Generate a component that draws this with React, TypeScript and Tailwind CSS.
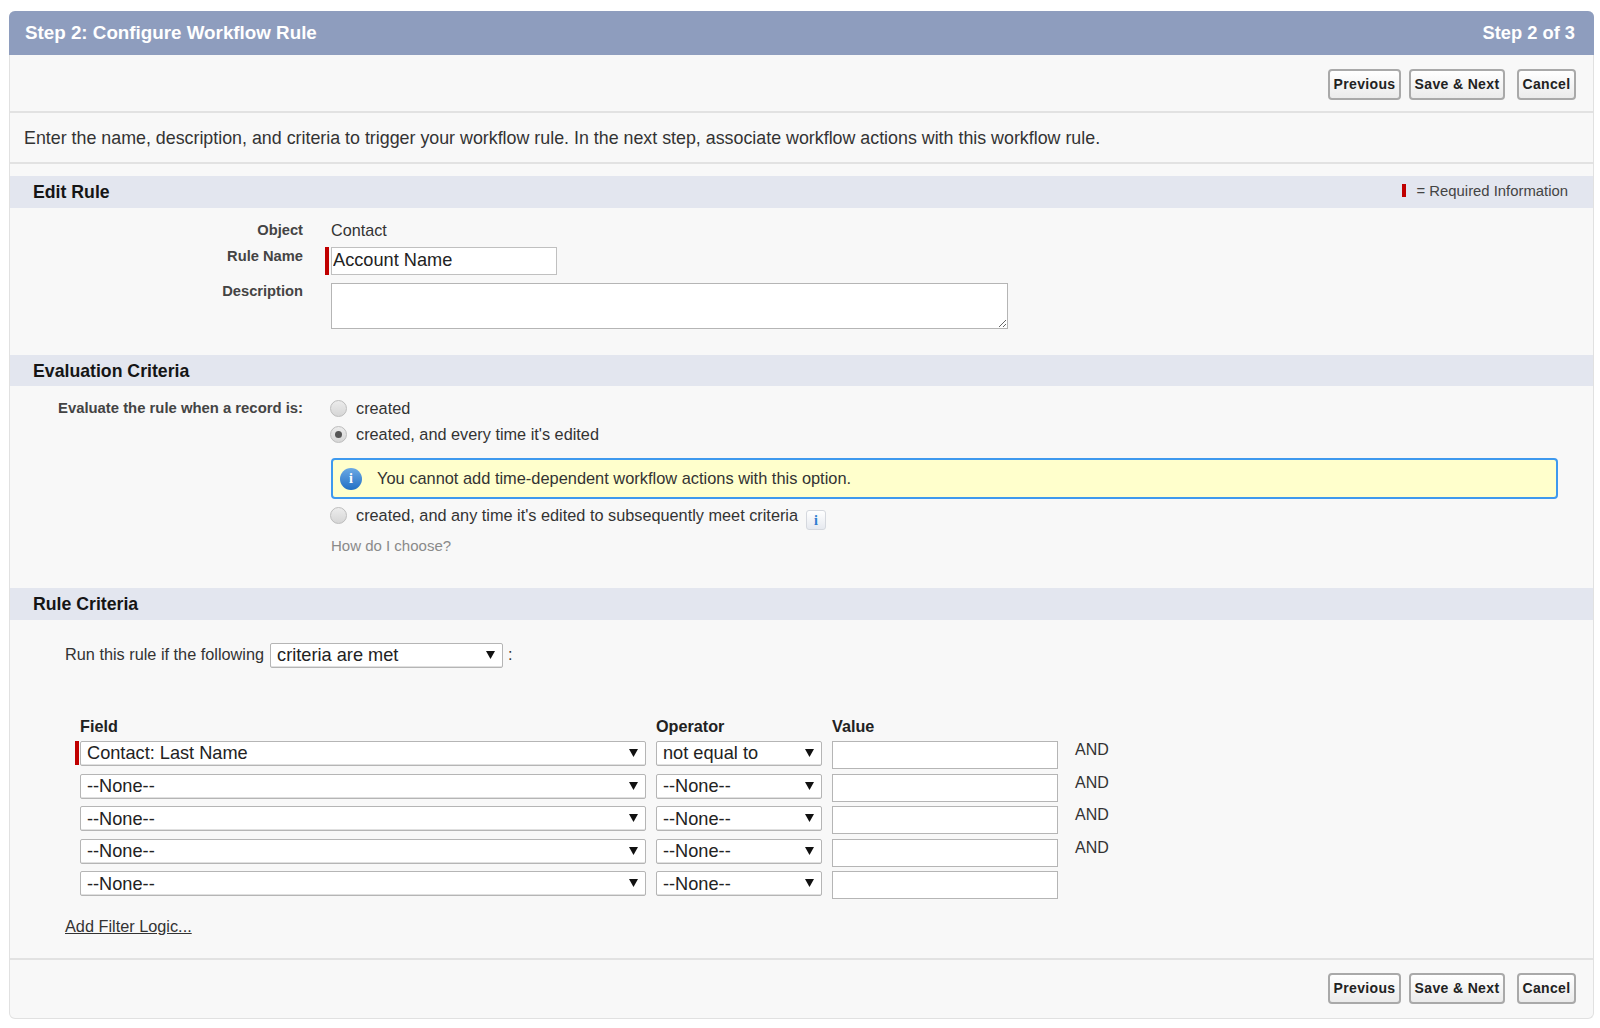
const FONT = "font-['Liberation_Sans',Arial,sans-serif]";

function ActionButtons() {
  return (
    <div className="flex justify-end pr-[17px]">
      <button className="h-[31px] w-[73px] rounded-[4px] border-2 border-[#a9a9a9] bg-gradient-to-b from-white to-[#ebebeb] text-[14px] font-bold tracking-[0.35px] text-[#222]">
        Previous
      </button>
      <button className="ml-[8px] h-[31px] w-[96px] rounded-[4px] border-2 border-[#a9a9a9] bg-gradient-to-b from-white to-[#ebebeb] text-[14px] font-bold tracking-[0.35px] text-[#222]">
        Save &amp; Next
      </button>
      <button className="ml-[12px] h-[31px] w-[59px] rounded-[4px] border-2 border-[#a9a9a9] bg-gradient-to-b from-white to-[#ebebeb] text-[14px] font-bold tracking-[0.35px] text-[#222]">
        Cancel
      </button>
    </div>
  );
}

function SectionBar({ title, height, children }: { title: string; height: string; children?: React.ReactNode }) {
  return (
    <div className={`flex items-center justify-between bg-[#e3e6ef] pl-[23px] pr-[25px] ${height}`}>
      <h2 className="text-[17.7px] font-bold text-[#151515]">{title}</h2>
      {children}
    </div>
  );
}

function Radio({ checked, label }: { checked?: boolean; label: string }) {
  return (
    <div className="flex items-center">
      <span className="flex h-[17px] w-[17px] shrink-0 items-center justify-center rounded-full border border-[#bdbdbd] bg-gradient-to-b from-[#ececec] to-[#d6d6d6]">
        {checked && <span className="h-[7px] w-[7px] rounded-full bg-[#555]" />}
      </span>
      <span className="ml-[9px] text-[16.3px] text-[#333]">{label}</span>
    </div>
  );
}

function Arrow() {
  return (
    <svg width="9" height="9" viewBox="0 0 9 9" className="mb-[2px] shrink-0">
      <path d="M0 1h9L4.5 9z" fill="#111" />
    </svg>
  );
}

function FakeSelect({ value, width }: { value: string; width: string }) {
  return (
    <div className={`flex h-[25px] items-center justify-between rounded-[2px] border border-[#b5b5b5] bg-white pl-[6px] pr-[7px] text-[18.2px] text-[#222] shadow-[inset_0_-1px_0_#e0e0e0] ${width}`}>
      <span className="pt-[1px]">{value}</span>
      <Arrow />
    </div>
  );
}

function CriteriaRow({ field, operator, required, joined }: { field: string; operator: string; required?: boolean; joined?: boolean }) {
  return (
    <div className="flex h-[32.6px] items-start">
      <div className="relative">
        {required && <span className="absolute left-[-5px] top-0 h-[24px] w-[4px] bg-[#c00000]" />}
        <FakeSelect value={field} width="w-[566px]" />
      </div>
      <div className="ml-[10px]">
        <FakeSelect value={operator} width="w-[166px]" />
      </div>
      <input readOnly className="ml-[10px] h-[28px] w-[226px] border border-[#b5b5b5] bg-white" />
      {joined && <span className="ml-[17px] text-[16px] leading-[18px] text-[#333]">AND</span>}
    </div>
  );
}

export default function App() {
  return (
    <div className={`min-h-[1028px] bg-white pb-[10px] pl-[9px] pr-[6px] pt-[11px] ${FONT}`}>
      <div className="rounded-[6px] border-x border-b border-[#e1e1e1] bg-[#f8f8f8]">
        <div className="-mx-px flex h-[44px] items-center justify-between rounded-t-[6px] bg-[#8e9dbe] pl-[16px] pr-[19px] font-bold text-white">
          <span className="text-[18.8px]">Step 2: Configure Workflow Rule</span>
          <span className="text-[18.3px]">Step 2 of 3</span>
        </div>

        <div className="h-[58px] border-b-2 border-[#e2e2e2] pt-[14px]">
          <ActionButtons />
        </div>

        <div className="flex h-[51px] items-center border-b-2 border-[#e2e2e2] pl-[14px] pt-[2px] text-[17.83px] text-[#333]">
          Enter the name, description, and criteria to trigger your workflow rule. In the next step, associate workflow actions with this workflow rule.
        </div>

        <div className="mt-[12px]">
          <SectionBar title="Edit Rule" height="h-[32px]">
            <div className="flex items-center text-[14.85px] text-[#444]">
              <span className="mb-[3px] mr-[11px] h-[13px] w-[4px] bg-[#c00000]" />
              <span className="mb-[2px]">= Required Information</span>
            </div>
          </SectionBar>
        </div>

        <div className="grid h-[147px] grid-cols-[293px_1fr] content-start gap-x-[28px] pt-[13px]">
          <div className="h-[18px] text-right text-[14.7px] font-bold leading-[18px] text-[#444]">Object</div>
          <div className="h-[18px] text-[16.2px] leading-[18px] text-[#333]">Contact</div>

          <div className="mt-[8px] h-[35px] text-right text-[14.7px] font-bold leading-[18px] text-[#444]">Rule Name</div>
          <div className="mt-[8px] flex h-[35px] items-start">
            <span className="-ml-[6px] mr-[2px] h-[28px] w-[4px] bg-[#c00000]" />
            <input
              readOnly
              defaultValue="Account Name"
              className="h-[28px] w-[226px] border border-[#c0c0c0] bg-white pl-[1px] pb-[1px] text-[18.2px] text-[#222]"
            />
          </div>

          <div className="text-right text-[14.7px] font-bold leading-[18px] text-[#444]">Description</div>
          <textarea readOnly className="mt-[1px] h-[46px] w-[677px] border border-[#b5b5b5] bg-white" />
        </div>

        <SectionBar title="Evaluation Criteria" height="h-[31px] pt-[1px]" />

        <div className="grid h-[202px] grid-cols-[293px_1fr] content-start gap-x-[28px] pt-[13px]">
          <div className="text-right text-[14.85px] font-bold leading-[18px] text-[#444]">
            Evaluate the rule when a record is:
          </div>
          <div className="-ml-[1px] pr-[35px]">
            <div className="flex h-[18px] items-center pt-[1px]">
              <Radio label="created" />
            </div>
            <div className="mt-[8px] flex h-[18px] items-center pt-[1px]">
              <Radio checked label="created, and every time it's edited" />
            </div>
            <div className="ml-[1px] mt-[15px] flex h-[41px] items-center rounded-[4px] border-2 border-[#3e99ee] bg-[#ffffcc] pl-[7px] text-[16.4px] text-[#333]">
              <span className="flex h-[22px] w-[22px] items-center justify-center rounded-full bg-gradient-to-b from-[#6aa9e4] to-[#1f6fc4] font-['Liberation_Serif',serif] text-[14px] font-bold text-white">
                i
              </span>
              <span className="ml-[15px]">You cannot add time-dependent workflow actions with this option.</span>
            </div>
            <div className="mt-[7px] flex h-[18px] items-center pt-[1px]">
              <Radio label="created, and any time it's edited to subsequently meet criteria" />
              <span className="ml-[8px] mt-[9px] flex h-[20px] w-[20px] items-center justify-center rounded-[3px] border border-[#d5d8de] bg-gradient-to-b from-white to-[#e6e9ef] font-['Liberation_Serif',serif] text-[14px] font-bold text-[#2f7ed0]">
                i
              </span>
            </div>
            <div className="ml-[1px] mt-[13px] text-[15px] leading-[18px] text-[#8a8a8a]">How do I choose?</div>
          </div>
        </div>

        <SectionBar title="Rule Criteria" height="h-[32px]" />

        <div className="h-[338px] pl-[55px] pt-[23px]">
          <div className="flex h-[24px] items-center text-[16.3px] text-[#333]">
            <span className="mb-[2px]">Run this rule if the following</span>
            <div className="ml-[6px]">
              <FakeSelect value="criteria are met" width="w-[233px]" />
            </div>
            <span className="mb-[1px] ml-[5px]">:</span>
          </div>

          <div className="mt-[51px] pl-[15px]">
            <div className="flex h-[17px] items-center text-[16.2px] font-bold text-[#222]">
              <span className="w-[576px]">Field</span>
              <span className="w-[176px]">Operator</span>
              <span>Value</span>
            </div>
            <div className="mt-[6px]">
              <CriteriaRow required joined field="Contact: Last Name" operator="not equal to" />
              <CriteriaRow joined field="--None--" operator="--None--" />
              <CriteriaRow joined field="--None--" operator="--None--" />
              <CriteriaRow joined field="--None--" operator="--None--" />
              <CriteriaRow field="--None--" operator="--None--" />
            </div>
          </div>

          <a className="mt-[13px] block text-[16.3px] leading-[18px] text-[#333] underline">Add Filter Logic...</a>
        </div>

        <div className="h-[60px] border-t-2 border-[#e2e2e2] pt-[13px]">
          <ActionButtons />
        </div>
      </div>
    </div>
  );
}
